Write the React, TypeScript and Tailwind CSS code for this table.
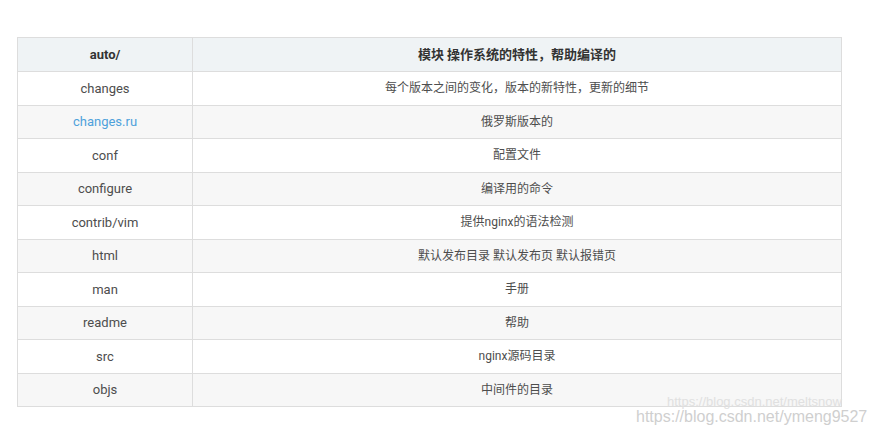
import React from 'react';

const rows: [string, string, boolean?][] = [
  ['changes', '每个版本之间的变化，版本的新特性，更新的细节'],
  ['changes.ru', '俄罗斯版本的', true],
  ['conf', '配置文件'],
  ['configure', '编译用的命令'],
  ['contrib/vim', '提供nginx的语法检测'],
  ['html', '默认发布目录 默认发布页 默认报错页'],
  ['man', '手册'],
  ['readme', '帮助'],
  ['src', 'nginx源码目录'],
  ['objs', '中间件的目录'],
];

const App: React.FC = () => {
  return (
    <div
      className="relative w-[874px] h-[435px] bg-white overflow-hidden"
      style={{ fontFamily: 'Roboto, "Noto Sans CJK SC", sans-serif' }}
    >
      <div className="pt-[37px] pl-[17px]">
        <table className="w-[825px] border-collapse text-[13px] text-[#4d4d4d] table-fixed">
          <colgroup>
            <col className="w-[175px]" />
            <col />
          </colgroup>
          <thead>
            <tr className="h-[34px] bg-[#eff3f5]">
              <th className="border border-[#dddddd] text-center font-bold text-[#333]">auto/</th>
              <th className="border border-[#dddddd] text-center font-bold text-[#333]">模块 操作系统的特性，帮助编译的</th>
            </tr>
          </thead>
          <tbody>
            {rows.map(([name, desc, link], i) => (
              <tr key={name} className={`h-[33.5px] ${i % 2 === 1 ? 'bg-[#f7f7f7]' : 'bg-white'}`}>
                <td className={`border border-[#dddddd] text-center ${link ? 'text-[#4ea1db]' : ''}`}>{name}</td>
                <td className="border border-[#dddddd] text-center text-[12px]">{desc}</td>
              </tr>
            ))}
          </tbody>
        </table>
      </div>

      {/* watermarks */}
      <div
        className="absolute left-[667px] top-[395px] whitespace-nowrap text-[13px] leading-none text-[#e0e0e0]"
        style={{ fontFamily: '"Liberation Sans", Arial, sans-serif' }}
      >
        https://blog.csdn.net/meltsnow
      </div>
      <div
        className="absolute left-[636px] top-[409px] whitespace-nowrap text-[16px] leading-none text-[#cfcfcf]"
        style={{ fontFamily: '"Liberation Sans", Arial, sans-serif' }}
      >
        https://blog.csdn.net/ymeng9527
      </div>
    </div>
  );
};

export default App;
